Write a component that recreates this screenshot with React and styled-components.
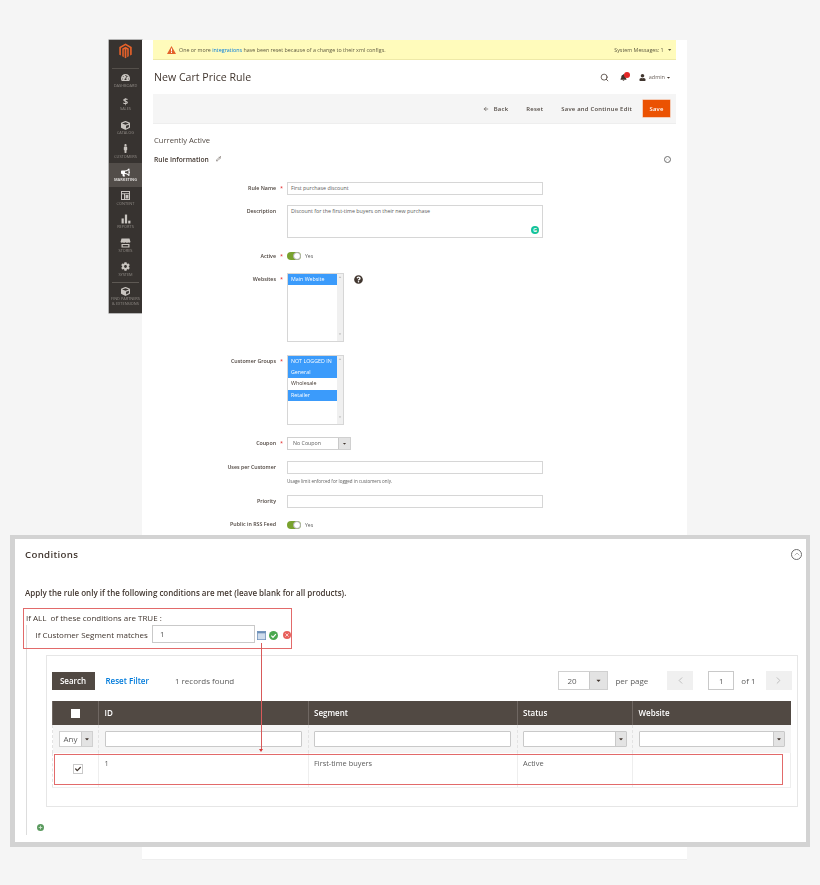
import React from 'react';
import styled, { createGlobalStyle } from 'styled-components';
import { FaTachometerAlt, FaCube, FaMale, FaBullhorn, FaCog, FaQuestionCircle, FaUser, FaBell, FaCheck, FaCaretDown, FaCaretUp } from 'react-icons/fa';
import { Search, ChevronUp, ChevronLeft, ChevronRight, ArrowLeft, Pencil } from 'lucide-react';

const Global = createGlobalStyle`
  html, body { margin: 0; padding: 0; background: #f5f5f5; }
  * { box-sizing: border-box; }
  body { font-family: "Open Sans", "Noto Sans", sans-serif; color: #41362f; }
`;

const Root = styled.div`
  position: relative;
  width: 820px;
  height: 885px;
  overflow: hidden;
  background: #f5f5f5;
`;
const Shell = styled.div`
  display: flex;
  align-items: flex-start;
  padding: 40px 0 0 109px;
  filter: blur(0.45px);
`;
const Sidebar = styled.nav`
  width: 33px;
  height: 273px;
  background: #373330;
  box-shadow: 0 0 0 0.5px #777;
  display: flex;
  flex-direction: column;
  align-items: stretch;
`;
const LogoWrap = styled.div`
  height: 29px;
  margin: 0 3px;
  border-bottom: 1px solid #55504b;
  display: flex;
  align-items: center;
  justify-content: center;
  padding-bottom: 5px;
  color: #e8622a;
`;
const NavItem = styled.div`
  height: ${p => p.$h || 23.7}px;
  padding-top: ${p => p.$pt ?? 4}px;
  display: flex;
  flex-direction: column;
  align-items: center;
  color: ${p => (p.$active ? '#dcdad7' : '#8f8a85')};
  background: ${p => (p.$active ? '#524d49' : 'transparent')};
  font-size: 3.9px;
  line-height: 5px;
  text-align: center;
  font-weight: ${p => (p.$active ? 700 : 400)};
  text-transform: uppercase;
  white-space: pre-line;
`;
const NavIcon = styled.div`
  height: 10px;
  display: flex;
  align-items: center;
  justify-content: center;
  font-size: 9px;
  font-weight: 700;
  color: ${p => (p.$active ? '#fff' : '#c9c5c0')};
`;
const NavRule = styled.div`
  height: 1px;
  margin: 1px 3px 0;
  background: #5e5954;
`;
const Main = styled.main`
  width: 545px;
  height: 820px;
  background: #fff;
  border-bottom: 1px solid #eee;
  padding: 0 11px;
  display: flex;
  flex-direction: column;
`;
const Notice = styled.div`
  height: 20px;
  background: #fffbbb;
  border-bottom: 1px solid #eee9a8;
  display: flex;
  align-items: center;
  justify-content: space-between;
  padding: 0 4px 0 14px;
  font-size: 5.33px;
  color: #5e5a40;
`;
const NoticeLeft = styled.div`
  display: flex;
  align-items: center;
  gap: 3px;
`;
const NoticeText = styled.span`
  margin-left: 0;
`;
const Link = styled.span`
  color: #007bdb;
`;
const PageHead = styled.div`
  height: 34px;
  display: flex;
  align-items: center;
  justify-content: space-between;
  padding-left: 1px;
`;
const Title = styled.h1`
  margin: 0;
  font-size: 10.6px;
  font-weight: 400;
  color: #41362f;
`;
const UserBar = styled.div`
  display: flex;
  align-items: center;
  padding-right: 5px;
  font-size: 5.5px;
  color: #6b625c;
`;
const AdminName = styled.span`
  margin-left: 3px;
`;
const IconSlot = styled.span`
  position: relative;
  display: flex;
  margin-left: ${p => p.$ml || 0}px;
  font-size: ${p => p.$size || 8}px;
  color: #41362f;
`;
const Badge = styled.span`
  position: absolute;
  top: -2px;
  right: -3.5px;
  width: 6px;
  height: 6px;
  border-radius: 50%;
  background: #e22626;
`;
const Actions = styled.div`
  height: 30px;
  background: #f5f5f5;
  border-bottom: 1px solid #eee;
  display: flex;
  align-items: center;
  justify-content: flex-end;
  padding-right: 6px;
  font-size: 5.9px;
  font-weight: 600;
  color: #514943;
  letter-spacing: 0.24px;
`;
const ActionText = styled.span`
  display: flex;
  align-items: center;
  gap: 5px;
  margin-right: ${p => p.$mr}px;
`;
const SaveButton = styled.span`
  width: 27px;
  height: 17px;
  background: #eb5202;
  color: #fff;
  display: flex;
  align-items: center;
  justify-content: center;
  box-shadow: 0 0 0 0.5px #f6a37a;
`;
const Active = styled.div`
  margin-top: 11px;
  height: 10px;
  line-height: 10px;
  font-size: 7.6px;
  color: #514943;
  padding-left: 1px;
`;
const InfoHead = styled.div`
  margin-top: 9px;
  height: 10px;
  display: flex;
  align-items: center;
  justify-content: space-between;
  padding: 0 5px 0 1px;
`;
const InfoTitle = styled.div`
  display: flex;
  align-items: center;
  gap: 7px;
  font-size: 6.7px;
  font-weight: 600;
  color: #41362f;
`;
const Collapse = styled.span`
  width: ${p => p.$size}px;
  height: ${p => p.$size}px;
  border: 0.7px solid #6d6d6d;
  border-radius: 50%;
  display: flex;
  align-items: center;
  justify-content: center;
  color: #6d6d6d;
`;
const Form = styled.div`
  margin-top: 18px;
`;
const Row = styled.div`
  display: grid;
  grid-template-columns: 123px 11px 1fr;
  align-items: ${p => (p.$top ? 'start' : 'center')};
  margin-bottom: ${p => p.$mb}px;
  font-size: 5.3px;
`;
const Label = styled.label`
  text-align: right;
  font-weight: 600;
  color: #4c433d;
  line-height: 13px;
`;
const Required = styled.span`
  color: #e22626;
  font-size: 5.5px;
  line-height: 13px;
  text-align: center;
`;
const TextInput = styled.div`
  width: ${p => p.$w || 256}px;
  height: ${p => p.$h || 13}px;
  border: 1px solid #d6d6d6;
  background: #fff;
  padding: 0 3px;
  line-height: 11.5px;
  color: #5c5c5c;
  font-size: 5.32px;
  position: relative;
`;
const Grammarly = styled.span`
  position: absolute;
  right: 3px;
  bottom: 3px;
  width: 8px;
  height: 8px;
  border-radius: 50%;
  background: #15c39a;
  color: #fff;
  font-size: 5.5px;
  line-height: 8px;
  text-align: center;
  font-weight: 700;
`;
const ToggleLine = styled.div`
  display: flex;
  align-items: center;
  gap: 4px;
  height: 13px;
  color: #5c5c5c;
  font-size: 5.1px;
`;
const Toggle = styled.span`
  width: 14px;
  height: 8px;
  border-radius: 4px;
  background: #79a22e;
  position: relative;
`;
const Knob = styled.span`
  position: absolute;
  right: 0;
  top: 0;
  width: 8px;
  height: 8px;
  border-radius: 50%;
  background: #fff;
  border: 0.5px solid #adadad;
`;
const ListRow = styled.div`
  display: flex;
  gap: 10px;
`;
const ListBox = styled.div`
  width: 57px;
  height: ${p => p.$h}px;
  border: 1px solid #d6d6d6;
  background: #fff;
  display: flex;
  flex-direction: column;
  padding-right: 6px;
  position: relative;
  font-size: 5.3px;
`;
const ListBar = styled.span`
  position: absolute;
  right: 0;
  top: 0;
  bottom: 0;
  width: 6px;
  background: #f0f0f0;
  display: flex;
  flex-direction: column;
  justify-content: space-between;
  align-items: center;
  padding: 1px 0 5px;
  color: #b5b5b5;
  font-size: 4px;
`;
const Option = styled.div`
  height: 11.4px;
  line-height: 11.4px;
  padding-left: 3px;
  white-space: nowrap;
  overflow: hidden;
  background: ${p => (p.$on ? '#3b9bfb' : 'transparent')};
  color: ${p => (p.$on ? '#fff' : '#41362f')};
`;
const Help = styled.span`
  color: #41362f;
  font-size: 9px;
  display: flex;
  height: 13px;
  align-items: center;
`;
const SelectBox = styled.div`
  width: ${p => p.$w}px;
  height: ${p => p.$h}px;
  border: 1px solid #d0d0d0;
  background: #fff;
  display: flex;
  align-items: center;
  justify-content: space-between;
  padding-left: ${p => p.$pl}px;
  color: #5c5c5c;
  font-size: ${p => p.$fs}px;
`;
const Caret = styled.span`
  width: ${p => p.$w}px;
  height: 100%;
  background: #e3e3e3;
  border-left: 0.7px solid #c9c9c9;
  display: flex;
  align-items: center;
  justify-content: center;
  color: #41362f;
  font-size: ${p => p.$size}px;
`;
const Note = styled.div`
  grid-column: 3;
  font-size: 4.5px;
  line-height: 10px;
  color: #5c5c5c;
  margin-top: 2px;
`;

const Callout = styled.section`
  position: absolute;
  left: 10px;
  top: 535px;
  width: 800px;
  height: 312px;
  background: #fff;
  border: solid #d3d3d3;
  border-width: 4px 4px 5px 5px;
  padding: 0 4px 0 10px;
  filter: blur(0.25px);
`;
const PanelHead = styled.header`
  height: 30px;
  display: flex;
  align-items: center;
  justify-content: space-between;
`;
const PanelTitle = styled.h2`
  margin: 0;
  font-size: 9.7px;
  font-weight: 600;
  color: #41362f;
  letter-spacing: 0.3px;
`;
const Apply = styled.p`
  margin: 16px 0 0;
  height: 16px;
  line-height: 16px;
  font-size: 8px;
  font-weight: 600;
  color: #41362f;
  white-space: nowrap;
`;
const RuleHead = styled.div`
  margin-top: 9px;
  height: 15px;
  line-height: 15px;
  padding-left: 1px;
  font-size: 8px;
  color: #41362f;
  white-space: nowrap;
`;
const Tree = styled.div`
  margin-left: 0.5px;
  border-left: 1px solid #ddd;
  height: 210px;
  padding-left: 9px;
`;
const Condition = styled.div`
  display: flex;
  align-items: center;
  height: 18px;
  font-size: 8px;
  color: #41362f;
`;
const ConditionInput = styled.span`
  width: 103px;
  height: 18px;
  margin-left: 4px;
  border: 1px solid #c9c9c9;
  padding-left: 7px;
  line-height: 16px;
  color: #5c5c5c;
`;
const RuleIcons = styled.span`
  display: flex;
  align-items: center;
  margin-left: 2px;
  padding-top: 2px;
  gap: 3px;
`;
const RemoveSlot = styled.span`
  display: flex;
  margin-left: 2px;
`;
const Frame = styled.div`
  margin: 12px 0 0 10px;
  width: 752px;
  height: 152px;
  border: 1px solid #e6e6e6;
  padding: 15px 5px 0;
`;
const Toolbar = styled.div`
  height: 19px;
  display: flex;
  align-items: center;
  font-size: 8px;
  color: #5c5c5c;
`;
const SearchButton = styled.span`
  width: 43px;
  height: 18px;
  background: #514943;
  color: #fff;
  font-weight: 600;
  display: flex;
  align-items: center;
  justify-content: center;
`;
const ResetLink = styled.span`
  margin-left: 11px;
  color: #007bdb;
  font-weight: 600;
`;
const Found = styled.span`
  margin-left: 26px;
  flex: 1;
`;
const PerPage = styled.span`
  margin: 0 19px 0 7px;
`;
const PageButton = styled.span`
  width: 26px;
  height: 19px;
  background: #f0f0f0;
  display: flex;
  align-items: center;
  justify-content: center;
  color: #a8a8a8;
`;
const PageInput = styled.span`
  width: 26px;
  height: 19px;
  margin-left: 15px;
  border: 1px solid #c9c9c9;
  text-align: center;
  line-height: 17px;
`;
const OfText = styled.span`
  margin: 0 10px 0 7px;
`;
const Table = styled.table`
  margin: 11px 0 0 0.5px;
  width: 739px;
  border-collapse: collapse;
  table-layout: fixed;
  font-size: 8px;
`;
const Th = styled.th`
  height: 23.5px;
  background: #514943;
  color: #fff;
  font-weight: 600;
  text-align: ${p => (p.$center ? 'center' : 'left')};
  padding: 0 5.5px;
  border-left: 1px solid #6f6762;
`;
const FilterCell = styled.td`
  height: 28.5px;
  background: #f5f5f5;
  padding: 0 5.5px;
  border-left: 1px dashed #e3e3e3;
`;
const Td = styled.td`
  height: 34px;
  vertical-align: top;
  padding: 5px 5.5px;
  color: #5c5c5c;
  font-size: 7.4px;
  border-left: 1px dashed #e3e3e3;
  border-right: 1px solid #eee;
  border-bottom: 1px solid #eee;
`;
const CheckCell = styled(Td)`
  vertical-align: middle;
  text-align: center;
  padding: 0 2px 2px 7px;
`;
const WhiteCheck = styled.span`
  display: inline-block;
  width: 9px;
  height: 9px;
  background: #fff;
  vertical-align: middle;
`;
const BoxCheck = styled.span`
  display: inline-flex;
  width: 10px;
  height: 10px;
  border: 1px solid #c9c9c9;
  align-items: center;
  justify-content: center;
  color: #41362f;
  font-size: 6px;
`;
const FilterInput = styled.div`
  height: 16px;
  background: #fff;
  border: 1px solid #c9c9c9;
  border-radius: 1px;
  display: flex;
  justify-content: flex-end;
`;
const Plus = styled.div`
  margin: 17px 0 0 1px;
  display: flex;
`;
const RedBox = styled.div`
  position: absolute;
  left: ${p => p.$x}px;
  top: ${p => p.$y}px;
  width: ${p => p.$w}px;
  height: ${p => p.$h}px;
  border: 1px solid #e26a6a;
  pointer-events: none;
`;
const RedLine = styled.div`
  position: absolute;
  left: 261px;
  top: 643px;
  width: 1px;
  height: 106px;
  background: #d85a5a;
  &::after {
    content: '';
    position: absolute;
    left: -2px;
    bottom: -3px;
    border: 2.5px solid transparent;
    border-top: 3px solid #d83a3a;
    border-bottom: 0;
  }
`;

const Logo = () => (
  <svg width="13" height="16" viewBox="0 0 24 28" fill="currentColor">
    <path d="M12 0 L23.5 6.8 V20.8 L20.5 22.5 V8.5 L12 3.5 L3.5 8.5 V22.5 L.5 20.8 V6.8Z" />
    <path d="M12 6.2 L18 9.6 V23.8 L15.2 25.4 V11.2 L13.6 10.3 V26.6 L12 27.6 L10.4 26.6 V10.3 L8.8 11.2 V25.4 L6 23.8 V9.6Z" />
  </svg>
);
const ContentIcon = () => (
  <svg width="9" height="9" viewBox="0 0 18 18" fill="none" stroke="currentColor" strokeWidth="2">
    <rect x="1" y="1" width="16" height="16" />
    <path d="M1 5.5H17M7 5.5V17" />
    <rect x="9" y="8" width="6" height="7" fill="currentColor" stroke="none" />
  </svg>
);
const ReportsIcon = () => (
  <svg width="10" height="10" viewBox="0 0 18 18" fill="currentColor">
    <rect x="1" y="8" width="4" height="9" />
    <rect x="7" y="1" width="4" height="16" />
    <rect x="13" y="12" width="4" height="5" />
  </svg>
);
const StoresIcon = () => (
  <svg width="11" height="10" viewBox="0 0 22 20" fill="currentColor">
    <path d="M3 1H19L21 8C20 10 17.5 10 16.5 8.4 15.5 10 13 10 11 8.4 9 10 6.500 10 5.500 8.400 4.500 10 2 10 1 8Z" />
    <path d="M3 12H19V19H3ZM5.500 14V17H16.500V14Z" fillRule="evenodd" />
  </svg>
);
const ChooserIcon = () => (
  <svg width="9" height="9" viewBox="0 0 12 12">
    <rect x=".5" y=".5" width="11" height="11" fill="#cfdcec" stroke="#6c8fb8" />
    <rect x=".5" y=".5" width="11" height="2.6" fill="#6c8fb8" />
  </svg>
);
const ApplyIcon = () => (
  <svg width="9" height="9" viewBox="0 0 10 10">
    <circle cx="5" cy="5" r="5" fill="#4aa84f" />
    <path d="M2.6 5.2 4.4 7 7.6 3.4" fill="none" stroke="#fff" strokeWidth="1.3" />
  </svg>
);
const RemoveIcon = () => (
  <svg width="8" height="8" viewBox="0 0 10 10">
    <circle cx="5" cy="5" r="5" fill="#e8605c" />
    <path d="M3 3 7 7M7 3 3 7" stroke="#fbd3d1" strokeWidth="1.2" />
  </svg>
);
const AddIcon = () => (
  <svg width="7" height="7" viewBox="0 0 10 10">
    <circle cx="5" cy="5" r="5" fill="#5a9a5e" />
    <path d="M5 2.4V7.6M2.4 5H7.6" stroke="#d6ead7" strokeWidth="1.2" />
  </svg>
);
const WarnIcon = () => (
  <svg width="9" height="8" viewBox="0 0 18 16">
    <path d="M9 0 18 16H0Z" fill="#e3632b" />
    <rect x="8" y="5" width="2" height="6" fill="#fff" />
    <rect x="8" y="12" width="2" height="2" fill="#fff" />
  </svg>
);

const nav = [
  { label: 'Dashboard', icon: <FaTachometerAlt /> },
  { label: 'Sales', icon: '$' },
  { label: 'Catalog', icon: <FaCube /> },
  { label: 'Customers', icon: <FaMale /> },
  { label: 'Marketing', icon: <FaBullhorn />, active: true },
  { label: 'Content', icon: <ContentIcon /> },
  { label: 'Reports', icon: <ReportsIcon /> },
  { label: 'Stores', icon: <StoresIcon /> },
  { label: 'System', icon: <FaCog /> },
];

const Switch = () => (
  <ToggleLine>
    <Toggle><Knob /></Toggle>
    Yes
  </ToggleLine>
);
const Scroll = () => (
  <ListBar><FaCaretUp /><FaCaretDown /></ListBar>
);

export default function App() {
  return (
    <Root>
      <Global />
      <Shell>
        <Sidebar>
          <LogoWrap><Logo /></LogoWrap>
          {nav.map(n => (
            <NavItem key={n.label} $active={n.active}>
              <NavIcon $active={n.active}>{n.icon}</NavIcon>
              {n.label}
            </NavItem>
          ))}
          <NavRule />
          <NavItem $h={30} $pt={3}>
            <NavIcon><FaCube /></NavIcon>
            {'Find Partners\n& Extensions'}
          </NavItem>
        </Sidebar>
        <Main>
          <Notice>
            <NoticeLeft>
              <IconSlot><WarnIcon /></IconSlot>
              <NoticeText>One or more <Link>integrations</Link> have been reset because of a change to their xml configs.</NoticeText>
            </NoticeLeft>
            <NoticeLeft>System Messages: 1 <FaCaretDown /></NoticeLeft>
          </Notice>
          <PageHead>
            <Title>New Cart Price Rule</Title>
            <UserBar>
              <IconSlot $size={8}><Search size={9} strokeWidth={2} /></IconSlot>
              <IconSlot $ml={11} $size={7}><FaBell /><Badge /></IconSlot>
              <IconSlot $ml={12} $size={7}><FaUser /></IconSlot>
              <AdminName>admin</AdminName>
              <IconSlot $ml={1} $size={5}><FaCaretDown /></IconSlot>
            </UserBar>
          </PageHead>
          <Actions>
            <ActionText $mr={18}><ArrowLeft size={6} strokeWidth={2.5} /> Back</ActionText>
            <ActionText $mr={18}>Reset</ActionText>
            <ActionText $mr={11}>Save and Continue Edit</ActionText>
            <SaveButton>Save</SaveButton>
          </Actions>
          <Active>Currently Active</Active>
          <InfoHead>
            <InfoTitle>Rule Information <Pencil size={5.5} strokeWidth={2} /></InfoTitle>
            <Collapse $size={7}><ChevronUp size={5} strokeWidth={1.5} /></Collapse>
          </InfoHead>
          <Form>
            <Row $mb={10}>
              <Label>Rule Name</Label><Required>*</Required>
              <TextInput>First purchase discount</TextInput>
            </Row>
            <Row $mb={11.5} $top>
              <Label>Description</Label><span />
              <TextInput $h={33}>Discount for the first-time buyers on their new purchase<Grammarly>G</Grammarly></TextInput>
            </Row>
            <Row $mb={10.5}>
              <Label>Active</Label><Required>*</Required>
              <Switch />
            </Row>
            <Row $mb={12.7} $top>
              <Label>Websites</Label><Required>*</Required>
              <ListRow>
                <ListBox $h={69}>
                  <Option $on>Main Website</Option>
                  <Scroll />
                </ListBox>
                <Help><FaQuestionCircle /></Help>
              </ListRow>
            </Row>
            <Row $mb={12.3} $top>
              <Label>Customer Groups</Label><Required>*</Required>
              <ListBox $h={70}>
                <Option $on>NOT LOGGED IN</Option>
                <Option $on>General</Option>
                <Option>Wholesale</Option>
                <Option $on>Retailer</Option>
                <Scroll />
              </ListBox>
            </Row>
            <Row $mb={11}>
              <Label>Coupon</Label><Required>*</Required>
              <SelectBox $w={64} $h={13} $pl={5} $fs={5.3}>No Coupon<Caret $w={12} $size={5}><FaCaretDown /></Caret></SelectBox>
            </Row>
            <Row $mb={9}>
              <Label>Uses per Customer</Label><span />
              <TextInput />
              <Note>Usage limit enforced for logged in customers only.</Note>
            </Row>
            <Row $mb={10.5}>
              <Label>Priority</Label><span />
              <TextInput />
            </Row>
            <Row $mb={0}>
              <Label>Public in RSS Feed</Label><span />
              <Switch />
            </Row>
          </Form>
        </Main>
      </Shell>

      <Callout>
        <PanelHead>
          <PanelTitle>Conditions</PanelTitle>
          <Collapse $size={11}><ChevronUp size={8} strokeWidth={1.5} /></Collapse>
        </PanelHead>
        <Apply>Apply the rule only if the following conditions are met (leave blank for all products).</Apply>
        <RuleHead>If ALL&nbsp; of these conditions are TRUE :</RuleHead>
        <Tree>
          <Condition>
            If Customer Segment matches
            <ConditionInput>1</ConditionInput>
            <RuleIcons>
              <ChooserIcon />
              <ApplyIcon />
              <RemoveSlot><RemoveIcon /></RemoveSlot>
            </RuleIcons>
          </Condition>
          <Frame>
            <Toolbar>
              <SearchButton>Search</SearchButton>
              <ResetLink>Reset Filter</ResetLink>
              <Found>1 records found</Found>
              <SelectBox $w={50} $h={19} $pl={8} $fs={8}>20<Caret $w={18} $size={7}><FaCaretDown /></Caret></SelectBox>
              <PerPage>per page</PerPage>
              <PageButton><ChevronLeft size={11} strokeWidth={1.5} /></PageButton>
              <PageInput>1</PageInput>
              <OfText>of 1</OfText>
              <PageButton><ChevronRight size={11} strokeWidth={1.5} /></PageButton>
            </Toolbar>
            <Table>
              <colgroup>
                <col width="46" />
                <col width="209.5" />
                <col width="209" />
                <col width="115.5" />
                <col />
              </colgroup>
              <thead>
                <tr>
                  <Th $center><WhiteCheck /></Th>
                  <Th>ID</Th>
                  <Th>Segment</Th>
                  <Th>Status</Th>
                  <Th>Website</Th>
                </tr>
                <tr>
                  <FilterCell>
                    <SelectBox $w={34} $h={16} $pl={4} $fs={8}>Any<Caret $w={11} $size={6}><FaCaretDown /></Caret></SelectBox>
                  </FilterCell>
                  <FilterCell><FilterInput /></FilterCell>
                  <FilterCell><FilterInput /></FilterCell>
                  <FilterCell><FilterInput><Caret $w={11} $size={6}><FaCaretDown /></Caret></FilterInput></FilterCell>
                  <FilterCell><FilterInput><Caret $w={11} $size={6}><FaCaretDown /></Caret></FilterInput></FilterCell>
                </tr>
              </thead>
              <tbody>
                <tr>
                  <CheckCell><BoxCheck><FaCheck /></BoxCheck></CheckCell>
                  <Td>1</Td>
                  <Td>First-time buyers</Td>
                  <Td>Active</Td>
                  <Td />
                </tr>
              </tbody>
            </Table>
          </Frame>
          <Plus><AddIcon /></Plus>
        </Tree>
      </Callout>

      <RedBox $x={23} $y={608} $w={269} $h={41} />
      <RedBox $x={54} $y={754} $w={729} $h={31} />
      <RedLine />
    </Root>
  );
}
